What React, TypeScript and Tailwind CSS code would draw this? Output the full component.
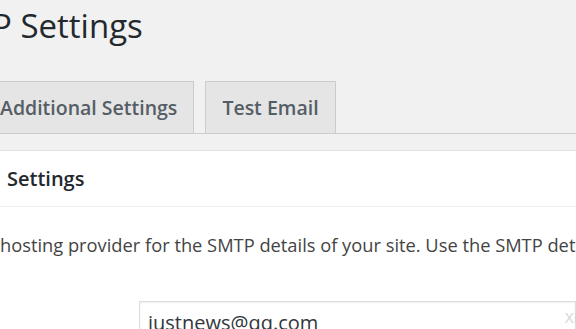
export default function App() {
  return (
    <div
      className="w-[576px] h-[329px] overflow-hidden bg-[#f1f1f1] text-[#1d2327]"
      style={{ fontFamily: '"Open Sans", "Noto Sans", sans-serif' }}
    >
      {/* 页面标题 */}
      <h1 className="h-[81px] pt-[2px] -ml-[8px] text-[33px] leading-[48px] font-normal text-[#23282d] whitespace-nowrap">
        P Settings
      </h1>

      {/* 标签页 */}
      <div className="flex items-end h-[53px] border-b border-[#cccccc] whitespace-nowrap">
        <div className="-ml-[17px] h-[53px] -mb-px px-[16px] flex items-center bg-[#e5e5e5] border border-[#cccccc] text-[19.5px] font-semibold text-[#555d66]">
          Additional Settings
        </div>
        <div className="ml-[11px] h-[53px] -mb-px px-[16px] flex items-center bg-[#e5e5e5] border border-[#cccccc] text-[19.5px] font-semibold text-[#555d66]">
          Test Email
        </div>
      </div>

      {/* 设置面板 */}
      <div className="mt-[16px] bg-white border-t border-[#e2e2e2]">
        <div className="h-[56px] flex items-center border-b border-[#eeeeee] pl-[7px] text-[20px] font-semibold text-[#23282d] whitespace-nowrap">
          Settings
        </div>
        <p className="h-[76px] pt-[25px] text-[18.3px] leading-[26px] text-[#444444] whitespace-nowrap">
          hosting provider for the SMTP details of your site. Use the SMTP details
        </p>
        <div className="relative ml-[139px] mt-[18px] h-[40px] border border-[#dddddd] shadow-[inset_0_1px_2px_rgba(0,0,0,0.07)] pl-[8px] pt-[8px] text-[20px] leading-[26px] text-[#32373c] whitespace-nowrap">
          justnews@qq.com
          <span className="absolute left-[425px] top-[2px] text-[15px] text-[#d4d4d4]">Xi</span>
        </div>
      </div>
    </div>
  )
}
